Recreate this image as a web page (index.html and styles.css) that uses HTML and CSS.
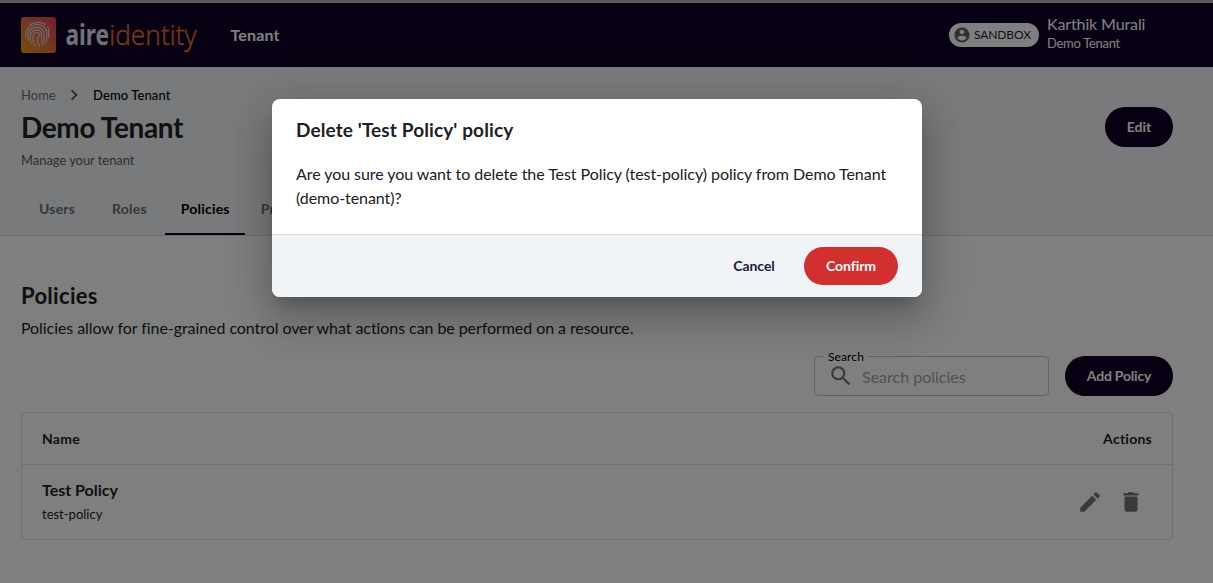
FILE: index.html
```html
<!DOCTYPE html>
<html lang="en">
<head>
<meta charset="utf-8">
<title>Demo Tenant - Policies</title>
<link rel="stylesheet" href="styles.css">
</head>
<body>
<header class="topbar">
  <svg class="mark" viewBox="0 0 35 36">
    <defs><linearGradient id="mark-fill" x1="0" y1="1" x2="1" y2="0"><stop offset="0" stop-color="#ee9d12"/><stop offset=".5" stop-color="#e96f3e"/><stop offset="1" stop-color="#df3f70"/></linearGradient></defs>
    <rect width="35" height="36" rx="3" fill="url(#mark-fill)"/>
    <g fill="none" stroke="#d3d6e6" stroke-width="1.200" stroke-linecap="round">
      <path d="M9 7.800C13 4.700 19.500 4.500 24 7.300"/>
      <path d="M4.800 19.500C4.300 13 8.500 8 15 7.500c6-.3 10 3 10.700 7.500.6 4-1 6 .8 8.500"/>
      <path d="M27 10.500c2.200 3.500-.6 6.500 1 10.500"/>
      <path d="M7.300 23.500C6 17 8.200 10.800 15 10.200c5-.2 8 3 8 7.500 0 3.500 .2 6 1.300 8.300"/>
      <path d="M10 26.500C8.300 22 8 13.500 15.500 12.800c3.600 0 5.300 2.500 5.200 6-.1 3.500.2 6.200 1.300 9"/>
      <path d="M14.300 29.500c-3-5-4.300-13 1.200-14 2.700-.1 3.300 1.900 2.600 3.500-.7 1.400-2 1.800-1.900 3.500.1 2.400 1 4.500 2.300 6.500"/>
    </g>
  </svg>
  <svg class="wordmark" viewBox="0 0 134 36">
    <defs><linearGradient id="word-fill" x1="0" y1="1" x2="0" y2="0"><stop offset="0" stop-color="#e98a20"/><stop offset="1" stop-color="#d64e52"/></linearGradient></defs>
    <text class="word-bold" x=".5" y="27.500" textLength="43.500" lengthAdjust="spacingAndGlyphs">aire</text>
    <text class="word-thin" x="44.200" y="27.500" textLength="87.500" lengthAdjust="spacingAndGlyphs" fill="url(#word-fill)">identity</text>
  </svg>
  <nav class="topnav">Tenant</nav>
  <div class="account">
    <span class="chip"><svg viewBox="0 0 24 24"><path d="M12 2C6.480 2 2 6.480 2 12s4.480 10 10 10 10-4.480 10-10S17.520 2 12 2zm0 3c1.660 0 3 1.340 3 3s-1.340 3-3 3-3-1.340-3-3 1.340-3 3-3zm0 14.200c-2.500 0-4.710-1.280-6-3.220.03-1.990 4-3.080 6-3.080 1.990 0 5.970 1.090 6 3.080-1.290 1.940-3.500 3.220-6 3.220z"/></svg>SANDBOX</span>
    <div class="who"><div class="who-name">Karthik Murali</div><div class="who-tenant">Demo Tenant</div></div>
  </div>
</header>
<section class="hero">
  <div class="crumbs"><span class="crumb-home">Home</span><svg viewBox="0 0 24 24"><path d="M10 6 8.590 7.410 13.170 12l-4.580 4.590L10 18l6-6z"/></svg><span class="crumb-now">Demo Tenant</span></div>
  <div class="hero-row">
    <div><h1>Demo Tenant</h1><p class="subtitle">Manage your tenant</p></div>
    <button class="btn btn-edit">Edit</button>
  </div>
  <div class="tabs"><span class="tab">Users</span><span class="tab">Roles</span><span class="tab tab-active">Policies</span><span class="tab">Pr</span></div>
</section>
<main class="content">
  <h2>Policies</h2>
  <p class="lead">Policies allow for fine-grained control over what actions can be performed on a resource.</p>
  <div class="tools">
    <div class="search"><span class="search-label">Search</span><svg viewBox="0 0 24 24"><path d="M15.500 14h-.79l-.28-.27C15.410 12.590 16 11.110 16 9.500 16 5.910 13.090 3 9.500 3S3 5.910 3 9.500 5.910 16 9.500 16c1.610 0 3.090-.59 4.230-1.570l.27.28v.79l5 4.990L20.490 19l-4.990-5zm-6 0C7.010 14 5 11.990 5 9.500S7.010 5 9.500 5 14 7.010 14 9.500 11.990 14 9.500 14z"/></svg><span class="search-hint">Search policies</span></div>
    <button class="btn btn-add">Add Policy</button>
  </div>
  <div class="table">
    <div class="thead"><span>Name</span><span>Actions</span></div>
    <div class="trow">
      <div><div class="row-name">Test Policy</div><div class="row-id">test-policy</div></div>
      <div class="row-actions">
        <svg viewBox="0 0 24 24"><path d="M3 17.250V21h3.750L17.810 9.940l-3.750-3.750L3 17.250zM20.710 7.040c.39-.39.39-1.020 0-1.410l-2.340-2.340c-.39-.39-1.020-.39-1.410 0l-1.830 1.830 3.750 3.750 1.830-1.830z"/></svg>
        <svg viewBox="0 0 24 24"><path d="M6 19c0 1.100.9 2 2 2h8c1.100 0 2-.9 2-2V7H6v12zM19 4h-3.500l-1-1h-5l-1 1H5v2h14V4z"/></svg>
      </div>
    </div>
  </div>
</main>
<div class="backdrop">
  <div class="dialog" role="dialog">
    <div class="dialog-body">
      <h3>Delete 'Test Policy' policy</h3>
      <p>Are you sure you want to delete the Test Policy (test-policy) policy from Demo Tenant (demo-tenant)?</p>
    </div>
    <div class="dialog-foot"><button class="btn btn-cancel">Cancel</button><button class="btn btn-confirm">Confirm</button></div>
  </div>
</div>
</body>
</html>
```
FILE: styles.css
```css
* { box-sizing: border-box; }
body { margin: 0; height: 583px; overflow: hidden; background: #fff; font-family: Lato, sans-serif; color: #202124; }
h1, h2, h3, p { margin: 0; }
svg { display: block; flex: none; }
.topbar { height: 67px; border-top: 3px solid #b4b3bb; background: #0f0024; display: flex; align-items: center; padding-left: 21px; color: #fff; }
.mark { width: 35px; height: 36px; }
.wordmark { width: 134px; height: 36px; margin-left: 9px; overflow: visible; }
.word-bold { font: 700 28px "Noto Sans", sans-serif; fill: #e2e3f0; }
.word-thin { font: 300 28px "Open Sans", sans-serif; stroke: url(#word-fill); stroke-width: .4px; }
.topnav { margin-left: 31.5px; font-size: 16px; font-weight: 700; line-height: 24px; letter-spacing: .15px; }
.account { margin-left: auto; width: 264px; display: flex; align-items: center; gap: 8px; }
.chip { width: 90px; height: 24px; border-radius: 12px; background: #fff; color: #24193a; display: flex; align-items: center; padding: 0 0 1px 4px; gap: 3px; font-size: 12px; letter-spacing: -.1px; }
.chip svg { width: 18px; height: 18px; fill: #616161; }
.who { margin-top: -4px; }
.who-name { font-size: 16px; line-height: 20px; letter-spacing: -.12px; }
.who-tenant { font-size: 13px; line-height: 18px; letter-spacing: -.3px; }
.hero { height: 169px; background: #f0f4f8; border-bottom: 1px solid #dcdfe2; padding: 18px 40px 0 21px; display: flex; flex-direction: column; }
.crumbs { display: flex; align-items: center; height: 20px; font-size: 13px; }
.crumbs svg { width: 22px; height: 22px; margin: 0 8px 0 7px; fill: #5a5a5f; }
.crumb-home { color: #6d6e72; letter-spacing: .1px; }
.crumb-now { font-weight: 500; color: #000; letter-spacing: .1px; }
.hero-row { display: flex; justify-content: space-between; align-items: flex-start; }
h1 { font-size: 28px; line-height: 34px; font-weight: 700; margin-top: 5px; letter-spacing: -.35px; }
.subtitle { font-size: 13px; line-height: 20px; margin-top: 6px; color: #5d5e63; letter-spacing: -.06px; }
.btn { border: 0; height: 40px; border-radius: 20px; padding: 0 0 1px; font-family: Lato, sans-serif; font-size: 14px; font-weight: 700; background: #0f0024; color: #fff; }
.btn-edit { width: 68px; margin-top: 2px; }
.tabs { margin-top: auto; height: 50px; display: flex; }
.tab { padding: 14px 16px 0 18px; font-size: 14px; line-height: 20px; font-weight: 700; color: #6d6e72; letter-spacing: .2px; }
.tab + .tab { padding-left: 21px; }
.tab + .tab.tab-active { padding: 14px 0 0 16px; width: 80px; margin-left: 2px; color: #000; border-bottom: 2px solid #0f0024; }
.tab-active + .tab { padding-left: 16px; }
.content { padding: 44px 40px 0 21px; }
h2 { font-size: 22px; line-height: 32px; font-weight: 700; letter-spacing: .3px; }
.lead { margin-top: 4px; font-size: 16px; line-height: 24px; letter-spacing: -.07px; }
.tools { display: flex; justify-content: flex-end; gap: 16px; margin-top: 16px; }
.search { position: relative; width: 235px; height: 40px; border: 1px solid #c4c4c4; border-radius: 4px; display: flex; align-items: center; padding-left: 13px; gap: 8px; }
.search svg { width: 26px; height: 26px; fill: #757575; }
.search-label { position: absolute; left: 8px; top: -8px; padding: 0 4px 0 5px; background: #fff; font-size: 12px; line-height: 16px; color: #000; letter-spacing: .1px; }
.search-hint { font-size: 16px; color: #a2a2a2; }
.btn-add { width: 108px; letter-spacing: -.2px; }
.table { margin-top: 16px; height: 128px; border: 1px solid #e0e0e0; border-radius: 4px; }
.thead { height: 52px; border-bottom: 1px solid #e0e0e0; padding: 0 20px; display: flex; justify-content: space-between; align-items: center; font-size: 14px; font-weight: 700; letter-spacing: .25px; }
.trow { height: 74px; display: flex; justify-content: space-between; align-items: center; padding: 0 28px 0 20px; }
.row-name { font-size: 16px; line-height: 24px; font-weight: 700; }
.row-id { font-size: 13px; line-height: 24px; }
.row-actions { display: flex; gap: 15px; }
.row-actions svg { width: 26px; height: 26px; fill: #757575; }
.backdrop { position: absolute; inset: 0; background: rgba(0, 0, 0, .5); }
.dialog { width: 650px; height: 198px; margin: 99px 0 0 272px; border-radius: 8px; overflow: hidden; background: #fff; box-shadow: 0 11px 15px -7px rgba(0,0,0,.2), 0 24px 38px 3px rgba(0,0,0,.14), 0 9px 46px 8px rgba(0,0,0,.12); display: flex; flex-direction: column; }
.dialog-body { flex: 1; padding: 17px 24px 0; }
h3 { font-size: 19px; line-height: 28px; font-weight: 700; letter-spacing: .11px; }
.dialog-body p { margin-top: 18px; font-size: 16px; line-height: 24px; letter-spacing: -.06px; }
.dialog-foot { height: 63px; border-top: 1px solid #d5dade; background: #f0f4f7; display: flex; justify-content: flex-end; align-items: center; padding-right: 24px; gap: 8px; }
.dialog-foot .btn { height: 38px; letter-spacing: -.05px; }
.btn.btn-cancel { width: 84px; background: transparent; color: #24193a; }
.btn.btn-confirm { width: 94px; background: #d32f2f; }
```
